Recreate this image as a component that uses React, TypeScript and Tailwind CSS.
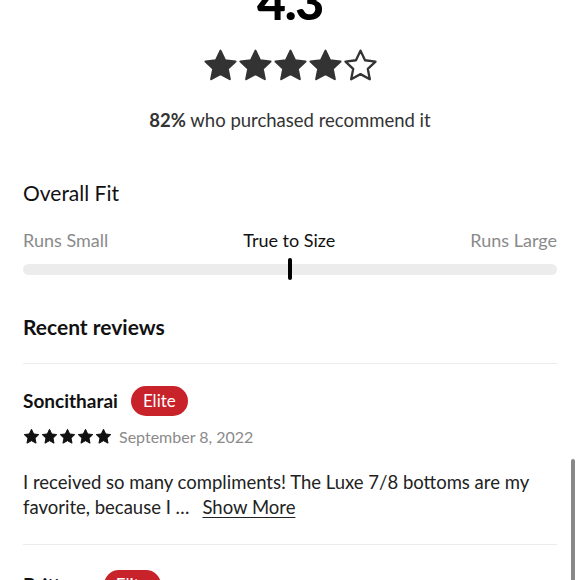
const STAR = 'M12 1.8l3.1 6.6 7.2.9-5.3 5 1.4 7.1L12 17.9l-6.4 3.5 1.4-7.1-5.3-5 7.2-.9z';

function Star({ size, filled, color }: { size: number; filled: boolean; color: string }) {
    return (
        <svg width={size} height={size} viewBox="0 0 24 24">
            <path
                d={STAR}
                fill={filled ? color : 'none'}
                stroke={color}
                strokeWidth={filled ? 1.4 : 1.6}
                strokeLinejoin="round"
            />
        </svg>
    );
}

function EliteBadge() {
    return (
        <span className="inline-flex items-center h-[30px] px-[12px] rounded-full bg-[#c8222a] text-white text-[17px] leading-none">
            Elite
        </span>
    );
}

export default function App() {
    return (
        <div className="relative w-[580px] h-[580px] overflow-hidden bg-white text-[#222] font-['Lato','Open_Sans',sans-serif]">
            {/* Rating summary */}
            <div className="flex flex-col items-center mt-[-24px]">
                <div className="text-[50px] leading-[50px] font-black text-black tracking-tight">
                    4.3
                </div>
                <div className="flex mt-[22px]">
                    {[0, 1, 2, 3, 4].map((i) => (
                        <Star key={i} size={35} filled={i < 4} color="#333" />
                    ))}
                </div>
                <p className="mt-[24px] text-[18.5px] text-[#333]">
                    <span className="font-bold">82%</span> who purchased recommend it
                </p>
            </div>

            {/* Overall fit */}
            <div className="px-[23px] mt-[42px]">
                <h3 className="text-[21px] text-[#111]">Overall Fit</h3>
                <div className="flex justify-between items-center mt-[19px] text-[18px]">
                    <span className="text-[#8a8a8a]">Runs Small</span>
                    <span className="text-[#111]">True to Size</span>
                    <span className="text-[#8a8a8a]">Runs Large</span>
                </div>
                <div className="relative mt-[10px] h-[11px] rounded-full bg-[#ececec]">
                    <div className="absolute left-[265px] top-[-6px] w-[4px] h-[22px] rounded-full bg-black" />
                </div>
            </div>

            {/* Recent reviews */}
            <div className="px-[23px] mt-[36px]">
                <h3 className="text-[21px] font-bold text-[#111]">Recent reviews</h3>
                <div className="mt-[20px] border-t border-[#ececec]" />

                <div className="pt-[22px] pb-[24px] border-b border-[#ececec]">
                    <div className="flex items-center gap-[13px]">
                        <span className="text-[19px] font-bold text-[#111]">Soncitharai</span>
                        <EliteBadge />
                    </div>
                    <div className="flex items-center gap-[7px] mt-[9px]">
                        <div className="flex gap-[1px]">
                            {[0, 1, 2, 3, 4].map((i) => (
                                <Star key={i} size={17} filled color="#111" />
                            ))}
                        </div>
                        <span className="text-[16px] text-[#8a8a8a]">September 8, 2022</span>
                    </div>
                    <p className="mt-[21px] text-[18.5px] leading-[25px] text-[#222]">
                        I received so many compliments! The Luxe 7/8 bottoms are my favorite, because I …
                        <span className="ml-[13px] underline underline-offset-[3px]">Show More</span>
                    </p>
                </div>

                <div className="pt-[25px]">
                    <div className="flex items-center gap-[13px]">
                        <span className="text-[19px] font-bold text-[#111]">Brittany</span>
                        <EliteBadge />
                    </div>
                </div>
            </div>

            {/* Scrollbar overlay */}
            <div className="absolute right-[5px] top-[459px] w-[4px] h-[130px] rounded-full bg-[#888]" />
        </div>
    );
}
